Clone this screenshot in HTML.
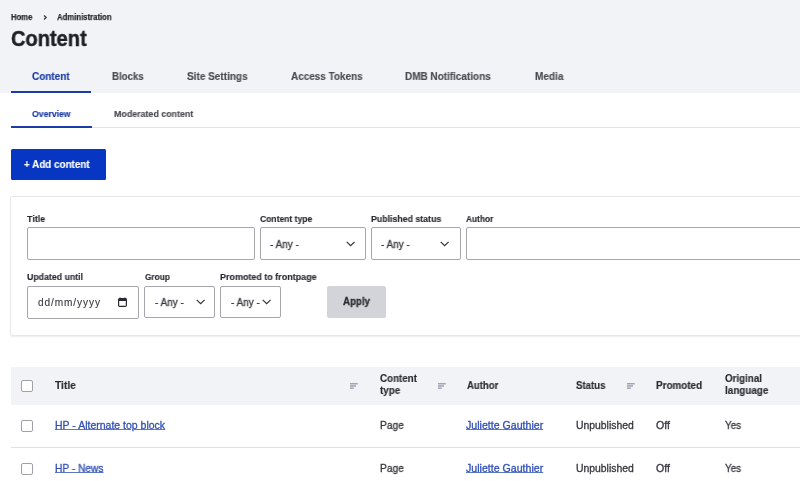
<!DOCTYPE html>
<html><head><meta charset="utf-8">
<style>
*{margin:0;padding:0;box-sizing:border-box}
html,body{width:800px;height:481px;overflow:hidden;background:#fff;font-family:"Liberation Sans",sans-serif;color:#232429}
.t{position:absolute;white-space:nowrap;transform-origin:0 50%;-webkit-font-smoothing:antialiased;will-change:transform}
.s{position:absolute;display:block}
.r{position:absolute}
</style></head><body>
<div class="r" style="left:0;top:0;width:800px;height:93px;background:#f2f3f6"></div>
<div class="t" style="left:11.00px;top:12.25px;font-size:8.50px;line-height:10px;font-weight:bold;color:#2a2b31;transform:scaleX(0.900);-webkit-text-stroke:0.25px #2a2b31;">Home</div>
<svg class="s" style="left:42.5px;top:15px" width="5" height="5" viewBox="0 0 5 5"><path d="M1 0.5 L3.2 2.5 L1 4.5" fill="none" stroke="#2a2b31" stroke-width="1.1"/></svg>
<div class="t" style="left:56.50px;top:12.25px;font-size:8.50px;line-height:10px;font-weight:bold;color:#2a2b31;transform:scaleX(0.910);-webkit-text-stroke:0.25px #2a2b31;">Administration</div>
<div class="t" style="left:10.60px;top:25.81px;font-size:21.90px;line-height:26px;font-weight:bold;color:#1f2026;transform:scaleX(0.915);-webkit-text-stroke:0.45px #1f2026;">Content</div>
<div class="t" style="left:31.70px;top:70.93px;font-size:10.30px;line-height:12px;font-weight:bold;color:#1b3ca8;transform:scaleX(0.965);-webkit-text-stroke:0.15px #1b3ca8;">Content</div>
<div class="t" style="left:112.10px;top:70.93px;font-size:10.30px;line-height:12px;font-weight:bold;color:#4a4b53;transform:scaleX(0.940);-webkit-text-stroke:0.15px #4a4b53;">Blocks</div>
<div class="t" style="left:186.50px;top:70.93px;font-size:10.30px;line-height:12px;font-weight:bold;color:#4a4b53;transform:scaleX(0.972);-webkit-text-stroke:0.15px #4a4b53;">Site Settings</div>
<div class="t" style="left:290.80px;top:70.93px;font-size:10.30px;line-height:12px;font-weight:bold;color:#4a4b53;transform:scaleX(0.965);-webkit-text-stroke:0.15px #4a4b53;">Access Tokens</div>
<div class="t" style="left:405.20px;top:70.93px;font-size:10.30px;line-height:12px;font-weight:bold;color:#4a4b53;transform:scaleX(0.967);-webkit-text-stroke:0.15px #4a4b53;">DMB Notifications</div>
<div class="t" style="left:534.60px;top:70.93px;font-size:10.30px;line-height:12px;font-weight:bold;color:#4a4b53;transform:scaleX(0.975);-webkit-text-stroke:0.15px #4a4b53;">Media</div>
<div class="r" style="left:11px;top:91px;width:80px;height:2px;background:#1b3ca8"></div>
<div class="t" style="left:31.80px;top:109.35px;font-size:9.10px;line-height:11px;font-weight:bold;color:#1b3ca8;transform:scaleX(0.955);-webkit-text-stroke:0.15px #1b3ca8;">Overview</div>
<div class="t" style="left:113.50px;top:109.35px;font-size:9.10px;line-height:11px;font-weight:bold;color:#4a4b53;transform:scaleX(0.975);-webkit-text-stroke:0.15px #4a4b53;">Moderated content</div>
<div class="r" style="left:11px;top:127px;width:789px;height:1px;background:#e2e3e8"></div>
<div class="r" style="left:11px;top:125.5px;width:81px;height:2px;background:#1b3ca8"></div>
<div class="r" style="left:10.5px;top:149px;width:95.5px;height:31px;background:#0737c2;border-radius:1.5px"></div>
<div class="t" style="left:23.60px;top:158.02px;font-size:10.60px;line-height:13px;font-weight:bold;color:#fff;transform:scaleX(0.930);-webkit-text-stroke:0.15px #fff;">+ Add content</div>
<div class="r" style="left:10px;top:196px;width:800px;height:140px;background:#fff;border:1px solid #e8e8ec;border-radius:2px;box-shadow:0 1px 1.5px rgba(0,0,0,0.07)"></div>
<div class="t" style="left:27.00px;top:213.55px;font-size:9.10px;line-height:11px;font-weight:bold;color:#2a2b31;transform:scaleX(0.975);-webkit-text-stroke:0.15px #2a2b31;">Title</div>
<div class="t" style="left:259.80px;top:213.55px;font-size:9.10px;line-height:11px;font-weight:bold;color:#2a2b31;transform:scaleX(0.940);-webkit-text-stroke:0.15px #2a2b31;">Content type</div>
<div class="t" style="left:370.75px;top:213.55px;font-size:9.10px;line-height:11px;font-weight:bold;color:#2a2b31;transform:scaleX(0.965);-webkit-text-stroke:0.15px #2a2b31;">Published status</div>
<div class="t" style="left:466.10px;top:213.55px;font-size:9.10px;line-height:11px;font-weight:bold;color:#2a2b31;transform:scaleX(0.915);-webkit-text-stroke:0.15px #2a2b31;">Author</div>
<div class="t" style="left:27.00px;top:272.15px;font-size:9.10px;line-height:11px;font-weight:bold;color:#2a2b31;transform:scaleX(0.965);-webkit-text-stroke:0.15px #2a2b31;">Updated until</div>
<div class="t" style="left:144.70px;top:272.15px;font-size:9.10px;line-height:11px;font-weight:bold;color:#2a2b31;transform:scaleX(0.910);-webkit-text-stroke:0.15px #2a2b31;">Group</div>
<div class="t" style="left:220.30px;top:272.15px;font-size:9.10px;line-height:11px;font-weight:bold;color:#2a2b31;transform:scaleX(0.985);-webkit-text-stroke:0.15px #2a2b31;">Promoted to frontpage</div>
<div class="r" style="left:27px;top:227px;width:228px;height:33px;border:1px solid #a6a7ad;border-radius:2px;background:#fff"></div>
<div class="r" style="left:260px;top:227px;width:106px;height:33px;border:1px solid #a6a7ad;border-radius:2px;background:#fff"></div>
<div class="r" style="left:371px;top:227px;width:90px;height:33px;border:1px solid #a6a7ad;border-radius:2px;background:#fff"></div>
<div class="r" style="left:466px;top:227px;width:340px;height:33px;border:1px solid #a6a7ad;border-radius:2px;background:#fff"></div>
<div class="t" style="left:269.90px;top:239.39px;font-size:10.40px;line-height:12px;font-weight:normal;color:#36373e;transform:scaleX(0.960);-webkit-text-stroke:0.3px #36373e;">- Any -</div>
<div class="t" style="left:380.60px;top:239.39px;font-size:10.40px;line-height:12px;font-weight:normal;color:#36373e;transform:scaleX(0.960);-webkit-text-stroke:0.3px #36373e;">- Any -</div>
<svg class="s" style="left:345.5px;top:241px" width="10" height="6" viewBox="0 0 10 6"><path d="M0.7 0.9 L4.65 4.7 L8.6 0.9" fill="none" stroke="#2e2f36" stroke-width="1.15"/></svg>
<svg class="s" style="left:440px;top:241px" width="10" height="6" viewBox="0 0 10 6"><path d="M0.7 0.9 L4.65 4.7 L8.6 0.9" fill="none" stroke="#2e2f36" stroke-width="1.15"/></svg>
<div class="r" style="left:27px;top:286px;width:112px;height:33px;border:1px solid #a6a7ad;border-radius:2px;background:#fff"></div>
<div class="r" style="left:144px;top:286px;width:71px;height:32px;border:1px solid #a6a7ad;border-radius:2px;background:#fff"></div>
<div class="r" style="left:220px;top:286px;width:61px;height:32px;border:1px solid #a6a7ad;border-radius:2px;background:#fff"></div>
<div class="t" style="left:38.10px;top:297.10px;font-size:10.10px;line-height:12px;font-weight:normal;color:#3a3b42;letter-spacing:0.9px;-webkit-text-stroke:0.12px #3a3b42;">dd/mm/yyyy</div>
<svg class="s" style="left:117.8px;top:297.2px" width="9.4" height="10" viewBox="0 0 9.4 10"><rect x="0.6" y="1.7" width="7.8" height="7.7" rx="1.1" fill="none" stroke="#2a2b31" stroke-width="1.2"/><rect x="0.6" y="1.7" width="7.8" height="2.3" fill="#2a2b31"/><rect x="1.3" y="0.4" width="1.5" height="2" rx="0.5" fill="#2a2b31"/><rect x="6.2" y="0.4" width="1.5" height="2" rx="0.5" fill="#2a2b31"/></svg>
<div class="t" style="left:154.60px;top:296.79px;font-size:10.40px;line-height:12px;font-weight:normal;color:#36373e;transform:scaleX(0.960);-webkit-text-stroke:0.3px #36373e;">- Any -</div>
<div class="t" style="left:230.50px;top:296.79px;font-size:10.40px;line-height:12px;font-weight:normal;color:#36373e;transform:scaleX(0.960);-webkit-text-stroke:0.3px #36373e;">- Any -</div>
<svg class="s" style="left:196px;top:299.3px" width="10" height="6" viewBox="0 0 10 6"><path d="M0.7 0.9 L4.65 4.7 L8.6 0.9" fill="none" stroke="#2e2f36" stroke-width="1.15"/></svg>
<svg class="s" style="left:261.5px;top:299.3px" width="10" height="6" viewBox="0 0 10 6"><path d="M0.7 0.9 L4.65 4.7 L8.6 0.9" fill="none" stroke="#2e2f36" stroke-width="1.15"/></svg>
<div class="r" style="left:327px;top:286px;width:59px;height:32px;background:#d3d4d9;border-radius:2px"></div>
<div class="t" style="left:343.00px;top:295.73px;font-size:10.00px;line-height:12px;font-weight:bold;color:#2a2b31;transform:scaleX(0.970);-webkit-text-stroke:0.3px #2a2b31;">Apply</div>
<div class="r" style="left:10.5px;top:367px;width:790px;height:37.5px;background:#f2f3f6"></div>
<div class="r" style="left:21px;top:379.5px;width:12px;height:12px;border:1.1px solid #a0a1a8;border-radius:2px;background:#fff"></div>
<div class="t" style="left:54.60px;top:380.03px;font-size:10.30px;line-height:12px;font-weight:bold;color:#2a2b31;transform:scaleX(0.990);-webkit-text-stroke:0.15px #2a2b31;">Title</div>
<svg class="s" style="left:350.3px;top:383.2px" width="8" height="6" viewBox="0 0 8 6"><rect x="0" y="0" width="7.7" height="1.5" fill="#a0a3b3"/><rect x="0" y="2.2" width="6" height="1.5" fill="#a0a3b3"/><rect x="0" y="4.4" width="3.8" height="1.5" fill="#a0a3b3"/></svg>
<div class="t" style="left:380.10px;top:372.70px;font-size:10.10px;line-height:12px;font-weight:bold;color:#2a2b31;transform:scaleX(0.970);-webkit-text-stroke:0.15px #2a2b31;">Content</div>
<div class="t" style="left:380.10px;top:384.90px;font-size:10.10px;line-height:12px;font-weight:bold;color:#2a2b31;transform:scaleX(0.970);-webkit-text-stroke:0.15px #2a2b31;">type</div>
<svg class="s" style="left:437.5px;top:383.2px" width="8" height="6" viewBox="0 0 8 6"><rect x="0" y="0" width="7.7" height="1.5" fill="#a0a3b3"/><rect x="0" y="2.2" width="6" height="1.5" fill="#a0a3b3"/><rect x="0" y="4.4" width="3.8" height="1.5" fill="#a0a3b3"/></svg>
<div class="t" style="left:467.10px;top:379.80px;font-size:10.10px;line-height:12px;font-weight:bold;color:#2a2b31;transform:scaleX(0.945);-webkit-text-stroke:0.15px #2a2b31;">Author</div>
<div class="t" style="left:576.20px;top:379.80px;font-size:10.10px;line-height:12px;font-weight:bold;color:#2a2b31;transform:scaleX(0.955);-webkit-text-stroke:0.15px #2a2b31;">Status</div>
<svg class="s" style="left:627.0px;top:383.2px" width="8" height="6" viewBox="0 0 8 6"><rect x="0" y="0" width="7.7" height="1.5" fill="#a0a3b3"/><rect x="0" y="2.2" width="6" height="1.5" fill="#a0a3b3"/><rect x="0" y="4.4" width="3.8" height="1.5" fill="#a0a3b3"/></svg>
<div class="t" style="left:656.20px;top:379.80px;font-size:10.10px;line-height:12px;font-weight:bold;color:#2a2b31;transform:scaleX(0.979);-webkit-text-stroke:0.15px #2a2b31;">Promoted</div>
<div class="t" style="left:724.50px;top:372.70px;font-size:10.10px;line-height:12px;font-weight:bold;color:#2a2b31;transform:scaleX(0.970);-webkit-text-stroke:0.15px #2a2b31;">Original</div>
<div class="t" style="left:724.50px;top:384.90px;font-size:10.10px;line-height:12px;font-weight:bold;color:#2a2b31;transform:scaleX(0.979);-webkit-text-stroke:0.15px #2a2b31;">language</div>
<div class="r" style="left:21px;top:420px;width:12px;height:12px;border:1.1px solid #a0a1a8;border-radius:2px;background:#fff"></div>
<div class="t" style="left:54.50px;top:420.29px;font-size:10.40px;line-height:12px;font-weight:normal;color:#3251b4;transform:scaleX(1.010);text-decoration:underline;text-decoration-color:#5f78c4;text-underline-offset:0px;-webkit-text-stroke:0.3px #3251b4;">HP - Alternate top block</div>
<div class="t" style="left:379.70px;top:419.99px;font-size:10.40px;line-height:12px;font-weight:normal;color:#36373e;transform:scaleX(0.980);-webkit-text-stroke:0.3px #36373e;">Page</div>
<div class="t" style="left:466.40px;top:419.99px;font-size:10.40px;line-height:12px;font-weight:normal;color:#3251b4;transform:scaleX(1.020);text-decoration:underline;text-decoration-color:#5f78c4;text-underline-offset:0px;-webkit-text-stroke:0.3px #3251b4;">Juliette Gauthier</div>
<div class="t" style="left:575.90px;top:419.99px;font-size:10.40px;line-height:12px;font-weight:normal;color:#36373e;-webkit-text-stroke:0.3px #36373e;">Unpublished</div>
<div class="t" style="left:656.20px;top:419.99px;font-size:10.40px;line-height:12px;font-weight:normal;color:#36373e;transform:scaleX(1.020);-webkit-text-stroke:0.3px #36373e;">Off</div>
<div class="t" style="left:725.30px;top:419.99px;font-size:10.40px;line-height:12px;font-weight:normal;color:#36373e;transform:scaleX(0.950);-webkit-text-stroke:0.3px #36373e;">Yes</div>
<div class="r" style="left:21px;top:463px;width:12px;height:12px;border:1.1px solid #a0a1a8;border-radius:2px;background:#fff"></div>
<div class="t" style="left:54.50px;top:463.29px;font-size:10.40px;line-height:12px;font-weight:normal;color:#3251b4;transform:scaleX(0.980);text-decoration:underline;text-decoration-color:#5f78c4;text-underline-offset:0px;-webkit-text-stroke:0.3px #3251b4;">HP - News</div>
<div class="t" style="left:379.70px;top:462.99px;font-size:10.40px;line-height:12px;font-weight:normal;color:#36373e;transform:scaleX(0.980);-webkit-text-stroke:0.3px #36373e;">Page</div>
<div class="t" style="left:466.40px;top:462.99px;font-size:10.40px;line-height:12px;font-weight:normal;color:#3251b4;transform:scaleX(1.020);text-decoration:underline;text-decoration-color:#5f78c4;text-underline-offset:0px;-webkit-text-stroke:0.3px #3251b4;">Juliette Gauthier</div>
<div class="t" style="left:575.90px;top:462.99px;font-size:10.40px;line-height:12px;font-weight:normal;color:#36373e;-webkit-text-stroke:0.3px #36373e;">Unpublished</div>
<div class="t" style="left:656.20px;top:462.99px;font-size:10.40px;line-height:12px;font-weight:normal;color:#36373e;transform:scaleX(1.020);-webkit-text-stroke:0.3px #36373e;">Off</div>
<div class="t" style="left:725.30px;top:462.99px;font-size:10.40px;line-height:12px;font-weight:normal;color:#36373e;transform:scaleX(0.950);-webkit-text-stroke:0.3px #36373e;">Yes</div>
<div class="r" style="left:10.5px;top:447px;width:790px;height:1px;background:#e0e1e6"></div>
</body></html>
